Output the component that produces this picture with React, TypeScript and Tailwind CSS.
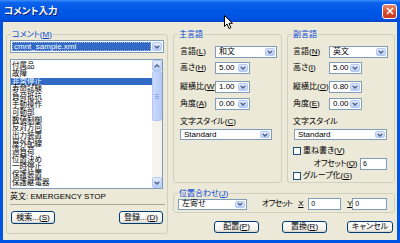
import React from 'react';

const items = ['付属品','故障','非常停止','寿命試験','負荷抵抗','手動操作','可動部','数値制御','反対方向','出力装置','屋外配線','過負荷','位置決め','一時停止','保護装置','保護継電器'];

function Chev({ up }: { up?: boolean }) {
  return (
    <svg width="6" height="4" viewBox="0 0 6 4" className={up ? 'rotate-180' : ''}>
      <path d="M0.7 0.7 L3 3 L5.3 0.7" stroke="#4D6185" strokeWidth="1.3" fill="none" />
    </svg>
  );
}

function ArrowBtn({ up, cls }: { up?: boolean; cls?: string }) {
  return (
    <div className={`shrink-0 flex items-center justify-center rounded-[2px] border border-[#B4C8F5] bg-[linear-gradient(to_bottom,#E6EEFE,#B9CCF8)] ${cls ?? 'w-[10px] h-full'}`}>
      <Chev up={up} />
    </div>
  );
}

function Combo({ cls, text, sel }: { cls: string; text: string; sel?: boolean }) {
  return (
    <div className={`flex shrink-0 border border-[#7F9DB9] bg-white p-[1px] ${cls}`}>
      <div className="flex-1 min-w-0 flex items-center pr-[1px]">
        {sel ? (
          <div className="w-full h-full bg-[#316AC5] text-white flex items-center pl-[1px] border border-dotted border-[#9DB6E4] leading-none">{text}</div>
        ) : (
          <span className="pl-[2px] leading-none">{text}</span>
        )}
      </div>
      <ArrowBtn />
    </div>
  );
}

function Btn({ cls, children }: { cls: string; children: React.ReactNode }) {
  return (
    <div className={`shrink-0 flex items-center justify-center rounded-[3px] border border-[#003C74] bg-[linear-gradient(to_bottom,#FFFFFF,#F0EFEA_80%,#D8D2C6)] leading-none whitespace-nowrap ${cls}`}>
      {children}
    </div>
  );
}

function Check({ children }: { children: React.ReactNode }) {
  return (
    <div className="flex items-center h-[9px]">
      <div className="w-[8px] h-[8px] border border-[#1C5180] bg-white shrink-0" />
      <span className="ml-[2px] leading-none whitespace-nowrap">{children}</span>
    </div>
  );
}

function Input({ cls, text }: { cls: string; text: string }) {
  return (
    <div className={`shrink-0 border border-[#7F9DB9] bg-white pl-[2px] pt-[1px] text-[7px] leading-[8px] ${cls}`}>{text}</div>
  );
}

const legend = 'ml-[4px] px-[1px] text-[8px] leading-[9px] text-[#0046D5] whitespace-nowrap';
const fs = 'border border-[#D0D0BF] rounded-[3px] shrink-0';

export default function App() {
  return (
    <div className="w-[400px] h-[243px] flex flex-col bg-[#0055E5] relative overflow-hidden font-['Liberation_Sans','Noto_Sans_CJK_JP',sans-serif] [font-feature-settings:'palt'] text-[8px] text-black">
      {/* title bar */}
      <div className="h-[22px] shrink-0 flex items-center justify-between pl-[4px] pr-[3px] bg-[linear-gradient(to_bottom,#3C8EFB_0%,#0B62EC_12%,#0058E6_45%,#0054E3_80%,#0046CC_100%)]">
        <span className="text-white font-bold text-[9.5px] [text-shadow:1px_1px_0_#0A1E6E]">コメント入力</span>
        <div className="w-[15px] h-[15px] rounded-[3px] border border-white bg-[linear-gradient(to_bottom,#E9866A,#D9472A_60%,#C63A1E)] flex items-center justify-center">
          <svg width="8" height="8" viewBox="0 0 8 8"><path d="M1 1 L7 7 M7 1 L1 7" stroke="white" strokeWidth="1.6" /></svg>
        </div>
      </div>

      {/* body */}
      <div className="flex-1 mx-[3px] mb-[3px] bg-[#ECE9D8] flex pl-[3px] pt-[8px]">
        {/* left */}
        <fieldset className={`${fs} w-[162px] h-[204px]`}>
          <legend className={legend}>コメント(<u>M</u>)</legend>
          <div className="flex flex-col pl-[3px]">
            <Combo cls="mt-[1px] w-[154px] h-[13px]" text="cmnt_sample.xml" sel />
            <div className="mt-[6px] w-[153px] h-[130px] border border-[#7F9DB9] bg-white flex">
              <div className="flex-1 pt-[2px]">
                {items.map((t, i) => (
                  <div key={t} className={`h-[7.8px] leading-[7.8px] pl-[1px] text-[7.5px] whitespace-nowrap ${i === 2 ? 'bg-[#316AC5] text-white' : ''}`}>{t}</div>
                ))}
              </div>
              <div className="w-[10px] h-full flex flex-col bg-[#F4F3EE]">
                <ArrowBtn up cls="w-[10px] h-[11px]" />
                <div className="w-[10px] h-[50px] rounded-[2px] border border-[#B4C8F5] bg-[linear-gradient(to_right,#C9D8FC,#B8CBF7)] flex flex-col items-center justify-center gap-[1px]">
                  <div className="w-[4px] h-[1px] bg-[#8CA6E4]" />
                  <div className="w-[4px] h-[1px] bg-[#8CA6E4]" />
                  <div className="w-[4px] h-[1px] bg-[#8CA6E4]" />
                </div>
                <div className="flex-1" />
                <ArrowBtn cls="w-[10px] h-[11px]" />
              </div>
            </div>
            <div className="mt-[1px] w-[155px] h-[15px] border-b border-[#ACA899] pt-[3px] leading-[8px] text-[8px]">英文: EMERGENCY STOP</div>
            <div className="mt-[6px] flex justify-between w-[153px] pl-[1px]">
              <Btn cls="w-[44px] h-[13px]">検索...(<u>S</u>)</Btn>
              <Btn cls="w-[44px] h-[13px]">登録...(<u>D</u>)</Btn>
            </div>
          </div>
        </fieldset>

        {/* right area */}
        <div className="ml-[5px] w-[222px] flex flex-col">
          <div className="flex gap-[5px]">
            <fieldset className={`${fs} w-[109px] h-[153px]`}>
              <legend className={legend}>主言語</legend>
              <div className="pl-[6px] flex flex-col">
                <div className="mt-[7px] h-[12px] flex items-center">
                  <span className="w-[35px] whitespace-nowrap">言語(<u>L</u>)</span>
                  <Combo cls="w-[62px] h-[12px]" text="和文" />
                </div>
                <div className="mt-[4px] h-[12px] flex items-center">
                  <span className="w-[35px] whitespace-nowrap">高さ(<u>H</u>)</span>
                  <Combo cls="w-[35px] h-[12px]" text="5.00" />
                </div>
                <div className="mt-[7px] h-[12px] flex items-center">
                  <span className="w-[35px] whitespace-nowrap">縦横比(<u>W</u>)</span>
                  <Combo cls="w-[35px] h-[12px]" text="1.00" />
                </div>
                <div className="mt-[5px] h-[12px] flex items-center">
                  <span className="w-[35px] whitespace-nowrap">角度(<u>A</u>)</span>
                  <Combo cls="w-[35px] h-[12px]" text="0.00" />
                </div>
                <div className="mt-[7px] h-[10px] leading-[10px] whitespace-nowrap">文字スタイル(<u>C</u>)</div>
                <Combo cls="mt-[2px] w-[92px] h-[11px]" text="Standard" />
              </div>
            </fieldset>
            <fieldset className={`${fs} w-[108px] h-[153px]`}>
              <legend className={legend}>副言語</legend>
              <div className="pl-[5px] flex flex-col">
                <div className="mt-[7px] h-[12px] flex items-center">
                  <span className="w-[36px] whitespace-nowrap">言語(<u>N</u>)</span>
                  <Combo cls="w-[59px] h-[12px]" text="英文" />
                </div>
                <div className="mt-[4px] h-[12px] flex items-center">
                  <span className="w-[36px] whitespace-nowrap">高さ(<u>I</u>)</span>
                  <Combo cls="w-[33px] h-[12px]" text="5.00" />
                </div>
                <div className="mt-[7px] h-[12px] flex items-center">
                  <span className="w-[36px] whitespace-nowrap">縦横比(<u>O</u>)</span>
                  <Combo cls="w-[33px] h-[12px]" text="0.80" />
                </div>
                <div className="mt-[5px] h-[12px] flex items-center">
                  <span className="w-[36px] whitespace-nowrap">角度(<u>E</u>)</span>
                  <Combo cls="w-[33px] h-[12px]" text="0.00" />
                </div>
                <div className="mt-[7px] h-[10px] leading-[10px] whitespace-nowrap">文字スタイル</div>
                <Combo cls="mt-[2px] ml-[1px] w-[93px] h-[11px]" text="Standard" />
                <div className="mt-[6px]">
                  <Check>重ね書き(<u>V</u>)</Check>
                </div>
                <div className="mt-[3px] h-[12px] flex items-center justify-end pr-[7px]">
                  <span className="mr-[3px] whitespace-nowrap tracking-[-0.3px]">オフセット(<u>Q</u>)</span>
                  <Input cls="w-[27px] h-[12px]" text="6" />
                </div>
                <div className="mt-[1px]">
                  <Check>グループ化(<u>G</u>)</Check>
                </div>
              </div>
            </fieldset>
          </div>

          <fieldset className={`${fs} mt-[6px] w-[222px] h-[24px]`}>
            <legend className={legend}>位置合わせ(<u>J</u>)</legend>
            <div className="h-[12px] flex items-center pl-[4px]">
              <Combo cls="w-[69px] h-[11px]" text="左寄せ" />
              <span className="ml-[15px] whitespace-nowrap tracking-[-0.8px]">オフセット</span>
              <span className="ml-[6px] w-[10px]"><u>X</u></span>
              <Input cls="w-[33px] h-[12px]" text="0" />
              <span className="ml-[6px] w-[5px]"><u>Y</u></span>
              <Input cls="w-[35px] h-[12px]" text="0" />
            </div>
          </fieldset>

          <div className="mt-[8px] flex">
            <Btn cls="ml-[41px] w-[45px] h-[12px]">配置(<u>P</u>)</Btn>
            <Btn cls="ml-[23px] w-[45px] h-[12px]">置換(<u>R</u>)</Btn>
            <Btn cls="ml-[20px] w-[46px] h-[12px]">キャンセル</Btn>
          </div>
        </div>
      </div>

      {/* mouse cursor */}
      <svg className="absolute left-[224px] top-[15px]" width="10" height="15" viewBox="0 0 10 15">
        <path d="M0.5 0.5 L0.5 11.5 L3 9 L5 13.5 L6.9 12.7 L5 8.3 L8.5 8.3 Z" fill="white" stroke="black" strokeWidth="1" strokeLinejoin="round" />
      </svg>
    </div>
  );
}
